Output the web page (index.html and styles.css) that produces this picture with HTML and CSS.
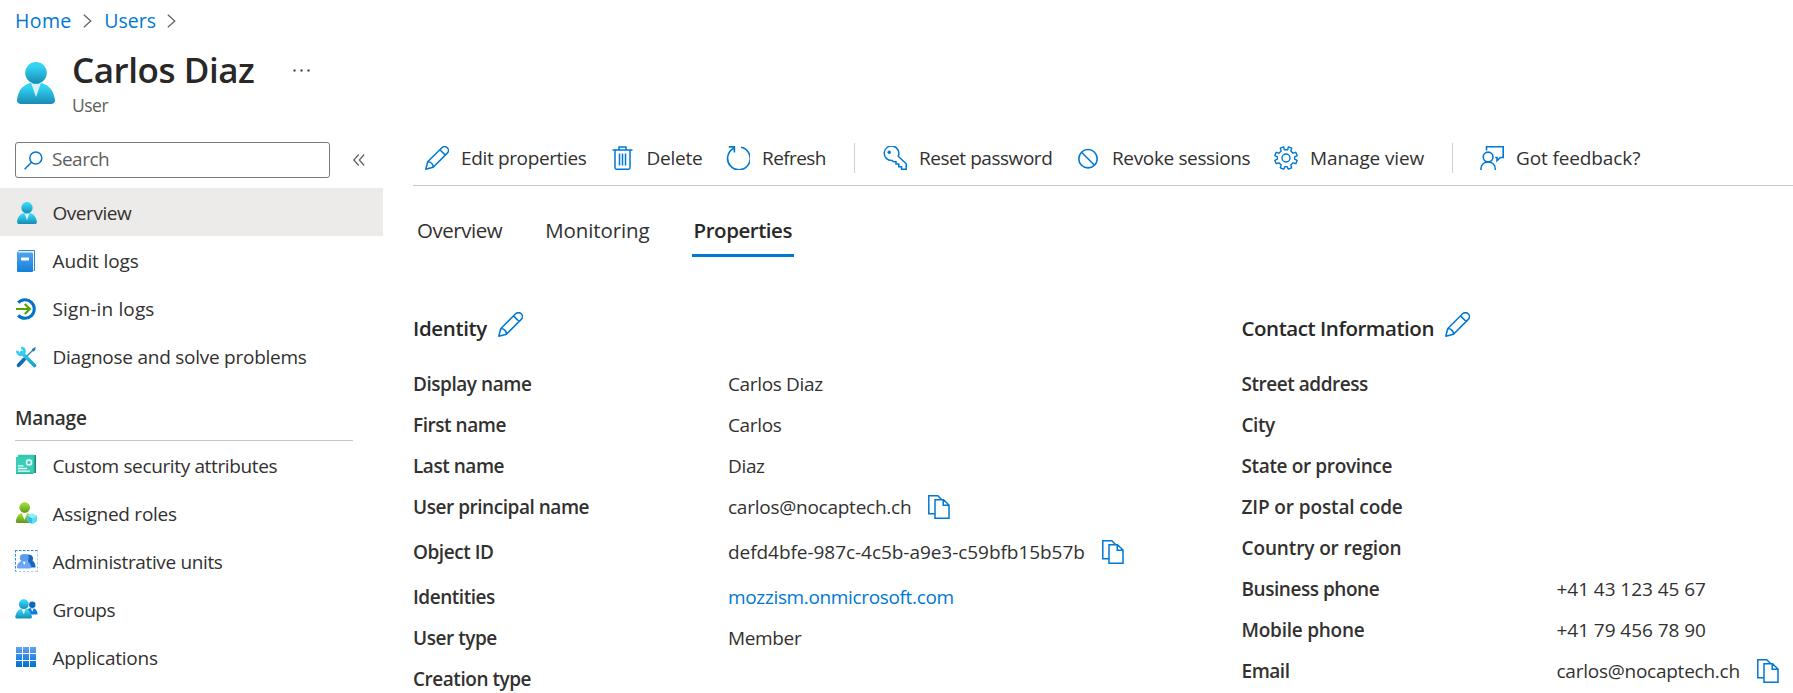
FILE: index.html
```
<!DOCTYPE html>
<html lang="en">
<head>
<meta charset="utf-8">
<title>Carlos Diaz - User</title>
<link rel="stylesheet" href="styles.css">
</head>
<body>
<svg class="defs" width="0" height="0">
  <defs>
    <linearGradient id="cyan" x1="0" y1="0" x2="0" y2="1"><stop offset=".2" stop-color="#32d4f5"/><stop offset="1" stop-color="#198ab3"/></linearGradient>
    <linearGradient id="green" x1="0" y1="0" x2="0" y2="1"><stop offset=".2" stop-color="#9ad82b"/><stop offset="1" stop-color="#5e9624"/></linearGradient>
    <linearGradient id="blue" x1="0" y1="0" x2="0" y2="1"><stop offset="0" stop-color="#50a3ee"/><stop offset="1" stop-color="#1380da"/></linearGradient>
    <linearGradient id="tile" gradientUnits="userSpaceOnUse" x1="0" y1="0" x2="0" y2="20"><stop offset="0" stop-color="#66a3f2"/><stop offset="1" stop-color="#0074d6"/></linearGradient>
    <linearGradient id="wrench" gradientUnits="userSpaceOnUse" x1="4" y1="4" x2="20" y2="20"><stop offset="0" stop-color="#32d4f5"/><stop offset="1" stop-color="#1b9fc9"/></linearGradient>
  </defs>
  <symbol id="person" viewBox="0 0 38 42">
    <path fill="url(#cyan)" d="M34.5 42a3.500 3.500 0 0 0 3.500-3.800C36.800 28.500 31.500 20.500 19 20.500S1 28 0 38.200A3.500 3.500 0 0 0 3.500 42z"/>
    <path fill="#d5f4fc" d="M19 22c-2 0-3.600-.4-5-1.200L19 35l5-14.200c-1.400.8-3 1.200-5 1.200z"/>
    <circle fill="url(#cyan)" cx="19" cy="10.800" r="10.800"/>
  </symbol>
  <symbol id="pencil" viewBox="0 0 24 24">
    <path fill="none" stroke="#0078d4" stroke-width="1.500" stroke-linejoin="round" d="M.8 23.200 2.700 15.800 16.900 1.700a3.800 3.800 0 0 1 5.400 5.400L8.200 21.300zM14.900 3.700l5.400 5.400M2.700 15.800c3 0 5.400 2.400 5.500 5.500"/>
  </symbol>
  <symbol id="copy" viewBox="0 0 22 24">
    <path fill="none" stroke="#0078d4" stroke-width="1.500" d="M7 18.800H.8V.8h9L13.500 4.500M7 4.800h8.500L21 10v13.200H7zM15.200 4.800v5.400H21M9.800.8l4 4"/>
  </symbol>
</svg>

<nav class="crumbs">
  <a class="crumb-home">Home</a>
  <svg class="chev" viewBox="0 0 9 14"><path d="M.8.8 7.800 7 .8 13.200"/></svg>
  <a>Users</a>
  <svg class="chev" viewBox="0 0 9 14"><path d="M.8.8 7.800 7 .8 13.200"/></svg>
</nav>

<header class="title-bar">
  <svg class="avatar"><use href="#person"/></svg>
  <div class="titles">
    <h1>Carlos Diaz</h1>
    <div class="kind">User</div>
  </div>
  <svg class="dots" viewBox="0 0 17 3"><path d="M.5.500h2v2h-2zM7.500.500h2v2h-2zM14.500.500h2v2h-2z"/></svg>
</header>

<div class="body">
  <aside class="side">
    <div class="search-row">
      <div class="search">
        <svg viewBox="0 0 19 19"><g fill="none" stroke="#0078d4" stroke-width="1.500"><circle cx="11.800" cy="7" r="6"/><path d="M7.500 11.300.6 18.300"/></g></svg>
        <span>Search</span>
      </div>
      <svg class="collapse" viewBox="0 0 12 12"><path d="M5.700.500.8 6l4.900 5.500M11.200.500 6.300 6l4.900 5.500"/></svg>
    </div>
    <div class="views">
      <a class="item active"><svg viewBox="0 0 22 22"><svg x="1" y="0" width="20" height="22"><use href="#person"/></svg></svg><span class="t4">Overview</span></a>
      <a class="item"><svg viewBox="0 0 22 22">
        <path fill="#2f86cf" d="M4 0h15a1 1 0 0 1 1 1v19a1 1 0 0 1-1 1H4L2 3z"/><path fill="#e8f3fc" d="M4 1h15v19.500h-2V2.800H2.800z"/><rect x="2" y="2.800" width="16" height="19.200" rx="1" fill="url(#blue)"/><rect x="6" y="7.500" width="8" height="3" rx=".4" fill="#fff"/></svg><span class="t1">Audit logs</span></a>
      <a class="item"><svg viewBox="0 0 22 22"><g fill="none"><path stroke="#0072cc" stroke-width="3" d="M3.200 4.600A9.300 9.300 0 1 1 3.200 17.400"/><path stroke="#57a300" stroke-width="2.200" d="M1 11h13M9.800 6l5 5-5 5"/></g></svg><span class="w1">Sign-in logs</span></a>
      <a class="item"><svg viewBox="0 0 22 22">
        <path stroke="#0f6cb5" stroke-width="3.800" stroke-linecap="round" d="M3.600 19.300 9 13.500"/><path stroke="#3c86b5" stroke-width="1.500" d="M10 12 18 4"/><path fill="#2b78a8" d="m17 3 3.800-2.200-.8 3.600-2.200 1.400z"/>
        <path stroke="url(#wrench)" stroke-width="3.600" stroke-linecap="round" d="m6.500 6.500 13 13"/><path fill="none" stroke="#32cdf0" stroke-width="2.800" d="M2.500 4.800A3.500 3.500 0 1 0 6.200 1.800"/></svg><span class="t2">Diagnose and solve problems</span></a>
    </div>
    <h2 class="t2">Manage</h2>
    <a class="item"><svg viewBox="0 0 22 22"><path fill="#208a83" d="M4 1h17v18h-4z"/><path fill="#32c6b2" d="M3 .8h16.500v17L18 20H1V3h2z"/><path fill="#2eb5a5" d="M1 3h17v17H1z"/><path fill="#3ccdb9" d="M1 3h17v15.500H1z"/><circle cx="14" cy="8.500" r="2.500" fill="none" stroke="#e9fbf8" stroke-width="1.600"/><path stroke="#e9fbf8" stroke-width="1.300" d="M3 11.800h5.500M3 14.500h9M3 17.200h12"/></svg><span class="t3">Custom security attributes</span></a>
    <a class="item"><svg viewBox="0 0 22 22"><path fill="url(#green)" d="M16 21a1.500 1.500 0 0 0 1.500-1.700C17 14.500 14.500 10.500 9.500 10.500S1.500 14.300.8 19.300A1.500 1.500 0 0 0 2.300 21z"/><path fill="#fff" d="m6.700 11 2.800 7 2.800-7z"/><circle cx="9.700" cy="5.500" r="5.300" fill="url(#green)"/><path fill="#8ceefa" d="m17.300 11.200 5 2.600v5.400l-5 2.800-5-2.800v-5.400z"/><path fill="#32bfe0" d="m12.300 13.800 5 2.700v5.500l-5-2.800z"/><path fill="#5bdcf2" d="m22.300 13.800-5 2.700v5.500l5-2.800z"/></svg><span class="t2">Assigned roles</span></a>
    <a class="item"><svg class="wide" viewBox="0 0 23 22"><path stroke="#2f86d2" stroke-dasharray="2.500 1.500" d="M0 .5h23M.5 0v22" /><path stroke="#a9d0f5" stroke-dasharray="2.500 1.500" d="M0 21.500h23M22.500 0v22"/><path fill="#1766bb" d="M12 4.500c4.500-.5 7.500 2.500 5.500 6 2 1.500 3 4 3 7h-7z"/><path fill="#6aa6f6" d="M15 18.500c1 0 1.600-.8 1.200-2-1-4-3-5.800-7-5.800s-6.500 2-7.200 5.800c-.2 1.200.3 2 1.200 2z"/><path fill="#fff" d="m7.700 11.500 1.500 3.800 1.500-3.800z"/><ellipse cx="9.300" cy="7.800" rx="4.500" ry="3.700" fill="#5c9bf0"/></svg><span class="t3">Administrative units</span></a>
    <a class="item"><svg class="wide" viewBox="0 0 23 22"><circle cx="17.300" cy="6.800" r="3.200" fill="#0c66c2"/><path fill="#0b7bdc" d="M12.500 11.500c1.500-1.300 3-1.500 4.800-1.500 3 0 4.700 2.500 5.200 5.400 0 .6-.4 1.100-1 1.100H15z"/><path fill="#fff" d="m15.700 10.300 1.600 3.500 1.600-3.500z"/><path fill="url(#cyan)" d="M15.500 20.500c1 0 1.600-.8 1.400-1.700C16.200 14 13.500 10.300 8.700 10.300S1 14 .3 18.800c-.1 1 .5 1.700 1.500 1.700z"/><path fill="#e9fafe" d="m6.500 10.800 2.200 5.400 2.200-5.400z"/><circle cx="8.800" cy="6.200" r="4.900" fill="url(#cyan)"/></svg><span class="t4">Groups</span></a>
    <a class="item"><svg viewBox="0 0 22 22"><path fill="url(#tile)" d="M1 1h6v6H1zM8 1h6v6H8zM15 1h6v6h-6zM1 8h6v6H1zM8 8h6v6H8zM15 8h6v6h-6zM1 15h6v6H1zM8 15h6v6H8zM15 15h6v6h-6z"/></svg><span class="t2">Applications</span></a>
  </aside>

  <main class="main">
    <div class="tools">
      <a class="tool"><svg><use href="#pencil"/></svg><span class="t3">Edit properties</span></a>
      <a class="tool"><svg viewBox="0.500 0 24 24"><path fill="none" stroke="#0078d4" stroke-width="1.500" d="M2 4h20M8.500 4V.9h7V4M4.500 4v17.500c0 1 .6 1.700 1.500 1.700h12c.9 0 1.500-.7 1.500-1.700V4M9 7.500v12M12 7.500v12M15 7.500v12"/></svg><span class="t2">Delete</span></a>
      <a class="tool"><svg viewBox="0 0 24 24"><path fill="none" stroke="#0078d4" stroke-width="1.600" d="M15 1.300A11.300 11.300 0 1 1 8 2.200M2.800.9h5.600v5.700"/></svg><span class="t5">Refresh</span></a>
      <i class="sep"></i>
      <a class="tool"><svg viewBox="0.800 0 24 24"><path fill="none" stroke="#0078d4" stroke-width="1.500" d="M16 10.200 24 17.800v5.400h-4.700v-2.500h-2.700v-2.600h-2.800v-2.300h-2.200l-1.700-1.300A7.300 7.300 0 1 1 16 10.200z"/><circle cx="7" cy="6.200" r="1.700" fill="#0078d4"/></svg><span class="t4">Reset password</span></a>
      <a class="tool"><svg viewBox="0 0 24 24"><g fill="none" stroke="#0078d4" stroke-width="1.600"><circle cx="12" cy="12.700" r="9.200"/><path d="m5.500 6.200 13 13"/></g></svg><span class="t3">Revoke sessions</span></a>
      <a class="tool"><svg viewBox="0 0 24 24"><g fill="none" stroke="#0078d4" stroke-width="1.400"><circle cx="12" cy="12" r="4"/><path stroke-linejoin="round" d="M10.300 3.800 9.700.9 6.300 2.200l.9 2.700-2.300 2.300-2.700-.9L.8 9.700l2.600 1.200v2.200L.8 14.300l1.400 3.400 2.700-.9 2.300 2.300-.9 2.700 3.400 1.400 1.200-2.600h2.200l1.200 2.600 3.400-1.400-.9-2.700 2.300-2.300 2.700.9 1.400-3.400-2.600-1.200v-2.200l2.600-1.200-1.400-3.400-2.700.9-2.300-2.300.9-2.700L14.300.9l-.6 2.900z"/></g></svg><span class="t1">Manage view</span></a>
      <i class="sep"></i>
      <a class="tool"><svg viewBox="0 0 24 24"><path fill="none" stroke="#0078d4" stroke-width="1.600" d="M6.500 4.500V.8h16.700v10.700h-2.700l-3.500 3.200v-3.200h-1.800M.8 24c0-5 3-8 7.300-8s7.300 3 7.300 8"/><circle cx="8.100" cy="11" r="4.900" fill="none" stroke="#0078d4" stroke-width="1.600"/></svg><span class="t1">Got feedback?</span></a>
    </div>

    <div class="tabs">
      <a class="tab t4">Overview</a>
      <a class="tab t1">Monitoring</a>
      <a class="tab selected t4">Properties</a>
    </div>

    <div class="columns">
      <section>
        <h3><span class="t3">Identity</span><svg><use href="#pencil"/></svg></h3>
        <dl>
          <dt>Display name</dt><dd>Carlos Diaz</dd>
          <dt>First name</dt><dd>Carlos</dd>
          <dt>Last name</dt><dd>Diaz</dd>
          <dt class="tall">User principal name</dt><dd class="tall"><span class="t2">carlos@nocaptech.ch</span><svg><use href="#copy"/></svg></dd>
          <dt class="tall">Object ID</dt><dd class="tall"><span class="t0">defd4bfe-987c-4c5b-a9e3-c59bfb15b57b</span><svg><use href="#copy"/></svg></dd>
          <dt>Identities</dt><dd><a>mozzism.onmicrosoft.com</a></dd>
          <dt>User type</dt><dd>Member</dd>
          <dt>Creation type</dt><dd></dd>
        </dl>
      </section>
      <section>
        <h3><span class="t4">Contact Information</span><svg><use href="#pencil"/></svg></h3>
        <dl>
          <dt>Street address</dt><dd></dd>
          <dt>City</dt><dd></dd>
          <dt class="t3">State or province</dt><dd></dd>
          <dt class="t1">ZIP or postal code</dt><dd></dd>
          <dt class="t1">Country or region</dt><dd></dd>
          <dt>Business phone</dt><dd><span class="t0">+41 43 123 45 67</span></dd>
          <dt class="t2">Mobile phone</dt><dd><span class="t0">+41 79 456 78 90</span></dd>
          <dt>Email</dt><dd><span class="t2">carlos@nocaptech.ch</span><svg><use href="#copy"/></svg></dd>
        </dl>
      </section>
    </div>
  </main>
</div>
</body>
</html>
```
FILE: styles.css
```
* { box-sizing: border-box; }
body {
  margin: 0;
  height: 693px;
  overflow: hidden;
  background: #fff;
  color: #323130;
  font: 400 19px/24px "Open Sans", "Noto Sans", sans-serif;
  letter-spacing: -0.35px;
  white-space: nowrap;
}
svg { display: block; flex: none; }
.defs { position: absolute; }
h1, h2, h3, dl, dd { margin: 0; }

/* letter-spacing steps */
.w1 { letter-spacing: 0.15px; }
.t0 { letter-spacing: -0.05px; }
.t1 { letter-spacing: -0.12px; }
.t2 { letter-spacing: -0.25px; }
.t3 { letter-spacing: -0.36px; }
.t4 { letter-spacing: -0.45px; }
.t5 { letter-spacing: -0.6px; }

.crumbs {
  display: flex;
  align-items: center;
  height: 41px;
  padding: 1px 0 0 15px;
  font-size: 19.5px;
  letter-spacing: 0;
}
.crumbs a, dd a { color: #0078d4; }
.crumb-home { letter-spacing: 0.4px; }
.chev { width: 9px; height: 14px; margin: 0 12px 1px 11.5px; }
.chev path, .collapse path { fill: none; stroke: #605e5c; stroke-width: 1.2; }

.title-bar { display: flex; height: 101px; padding-left: 17px; }
.avatar { width: 38px; height: 42px; margin-top: 21px; }
.titles { width: 221px; margin-left: 17px; padding-top: 6px; }
h1 { font-size: 35px; line-height: 46px; font-weight: 600; letter-spacing: -0.45px; color: #292827; }
.kind { font-size: 17.5px; line-height: 24px; letter-spacing: -0.5px; color: #605e5c; }
.dots { width: 17px; height: 3px; margin: 28px 0 0 0; fill: #323130; }

.body { display: flex; }
.side { width: 383px; flex: none; }
.search-row { display: flex; align-items: center; height: 46px; padding: 0 0 10px 15px; }
.search {
  display: flex;
  align-items: center;
  width: 315px;
  height: 36px;
  padding-left: 8px;
  border: 1px solid #7d7b79;
  border-radius: 3px;
  color: #605e5c;
  letter-spacing: -0.5px;
}
.search svg { width: 19px; height: 19px; margin-right: 9px; }
.search span { padding-bottom: 2px; }
.collapse { width: 12px; height: 12px; margin-left: 23px; }
.item { display: flex; align-items: center; height: 48px; padding-left: 15px; }
.item svg { width: 22px; height: 22px; margin-right: 15.5px; }
.item svg.wide { width: 23px; margin-right: 14.5px; }
.item svg svg { margin: 0; }
.item span { padding-top: 1px; }
.views svg { margin-top: 2px; }
.active { background: #edebe9; }
h2 {
  margin: 0 30px 0 15px;
  height: 61px;
  padding-top: 26px;
  border-bottom: 1px solid #c8c6c4;
  font-size: 19px;
  line-height: 24px;
  font-weight: 600;
}

.main { flex: 1; margin-left: 30px; min-width: 0; }
.tools {
  display: grid;
  grid-template-columns: 185.5px 115.5px 128px 29px 193px 198px 178px 28px 1fr;
  align-items: center;
  height: 44px;
  padding: 0 0 11px 12px;
  border-bottom: 1px solid #c8c6c4;
}
.tool { display: flex; align-items: center; }
.tool svg { width: 24px; height: 24px; margin-right: 12px; }
.sep { width: 1px; height: 30px; background: #d2d0ce; }

.tabs { display: flex; gap: 41px; height: 72px; padding: 25px 0 0 3px; }
.tab {
  height: 46px;
  padding: 6px 1px 0;
  font-size: 20.5px;
  line-height: 26px;
}
.selected { padding: 6px 2px 0; border-bottom: 3px solid #0078d4; font-weight: 600; color: #292827; }

.columns { display: grid; grid-template-columns: 828.5px 1fr; padding-top: 53px; }
h3 { display: flex; height: 53px; font-size: 20.5px; line-height: 34px; font-weight: 600; color: #292827; }
h3 svg { width: 25px; height: 25px; margin: 1px 0 0 11px; }
dl { display: grid; grid-template-columns: 315px 1fr; line-height: 41px; }
dt { font-weight: 600; letter-spacing: -0.46px; }
dd { display: flex; height: 41px; align-items: center; }
dd svg { width: 22px; height: 24px; margin: 0 0 1px 17px; }
.tall { margin-bottom: 4px; }
```
